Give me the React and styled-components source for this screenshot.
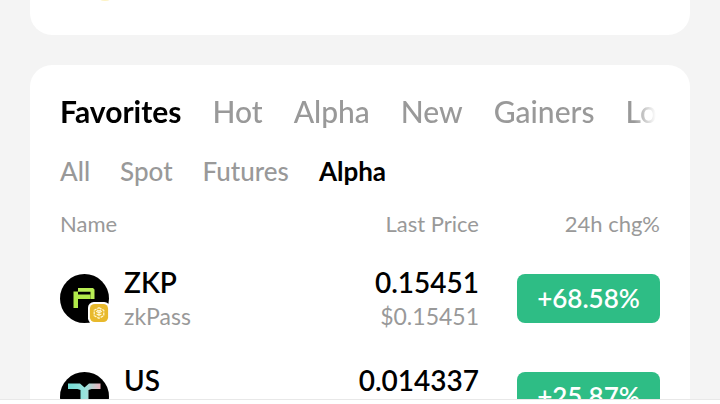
import React, { useState } from "react";
import styled, { createGlobalStyle } from "styled-components";

const GlobalStyle = createGlobalStyle`
  * {
    box-sizing: border-box;
  }
  body {
    margin: 0;
    background: #f4f4f4;
    color: #000;
    font-family: Lato, "Liberation Sans", sans-serif;
  }
  button {
    padding: 0;
    border: 0;
    background: none;
    font-family: inherit;
    cursor: pointer;
  }
  svg {
    display: block;
  }
`;

const StyledScreen = styled.div`
  display: flex;
  flex-direction: column;
  height: 100vh;
  overflow: hidden;
`;
const StyledContent = styled.main`
  flex: 1;
  min-height: 0;
  overflow: hidden;
  display: flex;
  flex-direction: column;
  gap: 30px;
  padding: 0 30px;
`;
const StyledBanner = styled.section`
  flex-shrink: 0;
  padding: 0 70px 32px;
  border-radius: 0 0 22px 22px;
  background: #fff;
`;
const StyledCard = styled.section`
  flex-shrink: 0;
  padding: 28px 30px;
  border-radius: 22px;
  background: #fff;
`;
const StyledTabs = styled.nav`
  display: flex;
  gap: 31px;
  overflow: hidden;
  mask-image: linear-gradient(
    to right,
    #000 calc(100% - 26px),
    transparent calc(100% - 4px)
  );
`;
const StyledSubTabs = styled.nav`
  display: flex;
  gap: 30px;
  margin-top: 24px;
`;
const StyledTab = styled.button`
  flex-shrink: 0;
  color: ${({ $active }) => ($active ? "#000" : "#999")};
  font-size: ${({ $small }) => ($small ? "26px" : "30px")};
  font-weight: ${({ $active }) => ($active ? 700 : 500)};
  line-height: 36px;
`;
const StyledTable = styled.table`
  width: 100%;
  margin-top: 20px;
  border-collapse: collapse;
  table-layout: fixed;
`;
const StyledHead = styled.th`
  height: 40px;
  padding: 0 0 10px;
  color: #999;
  font-size: 22px;
  font-weight: 400;
  line-height: 30px;
  text-align: ${({ $align }) => $align || "left"};
  white-space: nowrap;
`;
const StyledCell = styled.td`
  height: 98px;
  padding: 0;
  text-align: ${({ $align }) => $align || "left"};
  vertical-align: middle;
`;
const StyledCoin = styled.div`
  display: flex;
  align-items: center;
  gap: 15px;
`;
const StyledCoinIcon = styled.div`
  position: relative;
  width: 49px;
  height: 49px;
`;
const StyledBadge = styled.svg`
  position: absolute;
  right: -1px;
  bottom: -1px;
`;
const StyledMain = styled.div`
  font-size: 28px;
  font-weight: 600;
  line-height: 36px;
`;
const StyledSub = styled.div`
  color: #999;
  font-size: 23px;
  line-height: 32px;
`;
const StyledPrice = styled.div`
  padding-right: 38px;
`;
const StyledChange = styled.button`
  width: 143px;
  height: 49px;
  && {
    border-radius: 8px;
    background: #2ebd85;
  }
  color: #fff;
  font-size: 26px;
  font-weight: 600;
`;
const StyledFooter = styled.footer`
  flex-shrink: 0;
  height: 5px;
  border-top: 1px solid #e8e8e8;
  background: #fff;
`;

const ZkpLogo = () => (
  <svg width="49" height="49" viewBox="0 0 49 49" aria-hidden="true">
    <circle cx="24.5" cy="24.5" r="24.5" fill="#000" />
    <path d="M18 14H33L34.5 15.5V25H30.5V17.800H18Z" fill="#b9ee55" />
    <path d="M13.500 17.500H18V20.500H30.500V25H18V34H13.500Z" fill="#b1ea4a" />
  </svg>
);

const UsLogo = () => (
  <svg width="49" height="49" viewBox="0 0 49 49" aria-hidden="true">
    <defs>
      <linearGradient id="us" x1="0" y1="0" x2="1" y2="0">
        <stop offset="0" stopColor="#72ddd5" />
        <stop offset="0.55" stopColor="#9be2dc" />
        <stop offset="1" stopColor="#eab3bd" />
      </linearGradient>
    </defs>
    <circle cx="24.5" cy="24.5" r="24.5" fill="#000" />
    <path
      d="M8 11.500H20L24.500 15.500L29 11.500H40.500V17H31.500L28.500 18V41H20.500V18L17.500 17H8Z"
      fill="url(#us)"
    />
  </svg>
);

const ChainBadge = () => (
  <StyledBadge width="22" height="22" viewBox="0 0 23 23" aria-hidden="true">
    <rect width="23" height="23" rx="6" fill="#fff" />
    <rect x="2" y="2" width="19" height="19" rx="5" fill="#e8b92c" />
    <g fill="none" stroke="#fff6cf" strokeWidth="1.300">
      <path
        d="M11.500 6L16.500 8.700V14.300L11.500 17L6.500 14.300V8.700Z"
        strokeDasharray="3 1"
      />
      <path d="M8.500 9.700L11.500 11.300L14.500 9.700M11.500 11.300V15M9 12.500L11.500 14L14 12.500M9.500 8.500L11.500 9.500L13.500 8.500" />
    </g>
  </StyledBadge>
);

const tabs = ["Favorites", "Hot", "Alpha", "New", "Gainers", "Losers"];
const subTabs = ["All", "Spot", "Futures", "Alpha"];
const coins = [
  {
    symbol: "ZKP",
    name: "zkPass",
    price: "0.15451",
    change: "+68.58%",
    Logo: ZkpLogo,
  },
  {
    symbol: "US",
    name: "Talus",
    price: "0.014337",
    change: "+25.87%",
    Logo: UsLogo,
  },
];

const CoinRow = ({ coin }) => {
  const { symbol, name, price, change, Logo } = coin;
  return (
    <tr>
      <StyledCell>
        <StyledCoin>
          <StyledCoinIcon>
            <Logo />
            <ChainBadge />
          </StyledCoinIcon>
          <div>
            <StyledMain>{symbol}</StyledMain>
            <StyledSub>{name}</StyledSub>
          </div>
        </StyledCoin>
      </StyledCell>
      <StyledCell $align="right">
        <StyledPrice>
          <StyledMain>{price}</StyledMain>
          <StyledSub>${price}</StyledSub>
        </StyledPrice>
      </StyledCell>
      <StyledCell $align="right">
        <StyledChange>{change}</StyledChange>
      </StyledCell>
    </tr>
  );
};

const App = () => {
  const [tab, setTab] = useState("Favorites");
  const [subTab, setSubTab] = useState("Alpha");

  return (
    <>
      <GlobalStyle />
      <StyledScreen>
        <StyledContent>
          <StyledBanner>
            <svg width="12" height="3" viewBox="0 0 12 3" aria-hidden="true">
              <ellipse cx="5" cy="-1" rx="5" ry="2" fill="#fdf3c4" />
            </svg>
          </StyledBanner>
          <StyledCard>
            <StyledTabs>
              {tabs.map((item) => (
                <StyledTab
                  key={item}
                  $active={item === tab}
                  onClick={() => setTab(item)}
                >
                  {item}
                </StyledTab>
              ))}
            </StyledTabs>
            <StyledSubTabs>
              {subTabs.map((item) => (
                <StyledTab
                  key={item}
                  $small
                  $active={item === subTab}
                  onClick={() => setSubTab(item)}
                >
                  {item}
                </StyledTab>
              ))}
            </StyledSubTabs>
            <StyledTable>
              <colgroup>
                <col />
                <col />
                <col width="143" />
              </colgroup>
              <thead>
                <tr>
                  <StyledHead>Name</StyledHead>
                  <StyledHead $align="right">
                    <StyledPrice>Last Price</StyledPrice>
                  </StyledHead>
                  <StyledHead $align="right">24h chg%</StyledHead>
                </tr>
              </thead>
              <tbody>
                {coins.map((coin) => (
                  <CoinRow key={coin.symbol} coin={coin} />
                ))}
              </tbody>
            </StyledTable>
          </StyledCard>
        </StyledContent>
        <StyledFooter />
      </StyledScreen>
    </>
  );
};

export default App;
